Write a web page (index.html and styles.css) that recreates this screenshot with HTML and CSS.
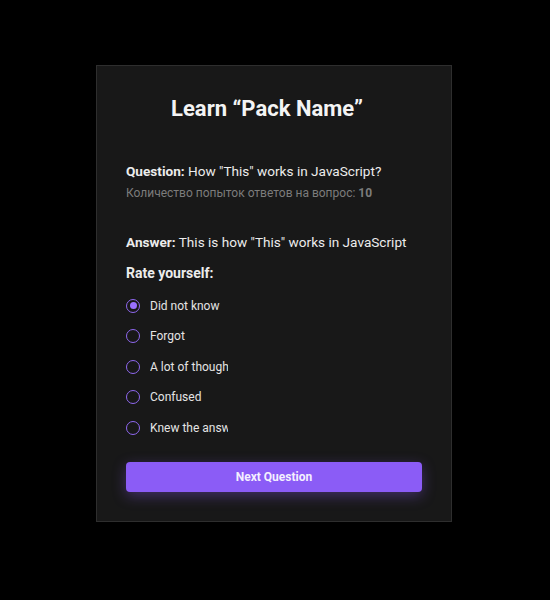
FILE: index.html
```html
<!DOCTYPE html>
<html>
<head>
<meta charset="utf-8">
<link rel="stylesheet" href="styles.css">
</head>
<body>
<div class="page">
  <div class="card">
    <h1 class="title">Learn “Pack Name”</h1>
    <div class="question"><b>Question:</b> How "This" works in JavaScript?</div>
    <div class="attempts">Количество попыток ответов на вопрос: <b>10</b></div>
    <div class="answer"><b>Answer:</b> This is how "This" works in JavaScript</div>
    <div class="rate">Rate yourself:</div>
    <ul class="options">
      <li class="option"><span class="radio checked"></span><span class="label">Did not know</span></li>
      <li class="option"><span class="radio"></span><span class="label">Forgot</span></li>
      <li class="option"><span class="radio"></span><span class="label">A lot of thought</span></li>
      <li class="option"><span class="radio"></span><span class="label">Confused</span></li>
      <li class="option"><span class="radio"></span><span class="label">Knew the answer</span></li>
    </ul>
    <button class="next">Next Question</button>
  </div>
</div>
</body>
</html>
```

FILE: styles.css
```css
* { box-sizing: border-box; }
html, body { margin: 0; padding: 0; background: #000; }
body { font-family: Roboto, "Noto Sans", sans-serif; color: #ececec; width: 550px; height: 600px; }
.page { padding-top: 65px; padding-left: 96px; }
.card {
  width: 356px;
  height: 457px;
  background: #181818;
  border: 1px solid #2e2e2e;
  padding: 0 29px;
  display: flex;
  flex-direction: column;
}
.title {
  margin: 28px 0 0;
  font-size: 22px;
  font-weight: 700;
  text-align: center;
  color: #f4f4f4;
  line-height: 30px;
  padding-right: 14px;
}
.question { margin-top: 38px; font-size: 13.6px; line-height: 18px; }
.question b, .answer b { font-weight: 700; }
.attempts { margin-top: 5px; font-size: 12px; color: #7c7c7c; line-height: 16px; }
.attempts b { font-weight: 700; }
.answer { margin-top: 32px; font-size: 13.6px; line-height: 18px; }
.rate { margin-top: 13px; font-size: 14px; font-weight: 700; line-height: 18px; }
.options { list-style: none; margin: 15px 0 0; padding: 0; display: flex; flex-direction: column; gap: 13px; }
.option { display: flex; align-items: center; height: 17.5px; }
.radio {
  width: 14px; height: 14px; border-radius: 50%;
  border: 1.8px solid #8f68f0;
  display: flex; align-items: center; justify-content: center;
  flex: none;
}
.radio.checked::after {
  content: ""; width: 7px; height: 7px; border-radius: 50%; background: #9a70ff;
}
.label {
  margin-left: 10px; font-size: 12px; color: #e4e4e4;
  width: 78px; overflow: hidden; white-space: nowrap;
}
.next {
  margin-top: 25px;
  width: 296px; height: 30px;
  border: none; border-radius: 4px;
  background: #8b5cf6;
  color: #f4f0ff;
  font-family: Roboto, sans-serif;
  font-size: 12px; font-weight: 700;
  box-shadow: 0 4px 14px rgba(139, 92, 246, 0.35);
}
```
